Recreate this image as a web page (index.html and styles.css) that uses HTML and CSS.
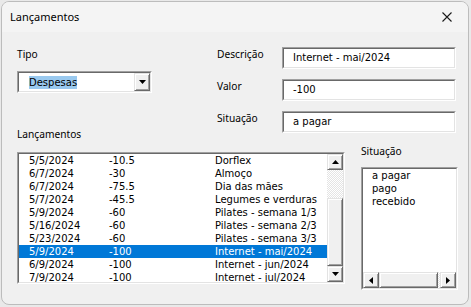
FILE: index.html
```html
<!DOCTYPE html>
<html lang="pt-BR">
<head>
    <meta charset="UTF-8">
    <title>Lançamentos</title>
    <link rel="stylesheet" href="styles.css">
</head>
<body>

    <div class="window">
        <div class="titlebar">
            <span class="title">Lançamentos</span>
            <svg class="close" width="10" height="10" viewBox="0 0 10 10">
                <path d="M0.5 0.5 L9.5 9.5 M9.5 0.5 L0.5 9.5" stroke="#1a1a1a" stroke-width="1.1" fill="none"/>
            </svg>
        </div>

        <div class="form">
            <div class="top">
                <div class="left-col">
                    <div class="label">Tipo</div>
                    <div class="sunken combo">
                        <div class="sunken-in combo-in">
                            <div class="combo-text"><span class="hl">Despesas</span></div>
                            <div class="btn3d combo-btn">
                                <svg width="7" height="4" viewBox="0 0 7 4"><polygon points="0,0 7,0 3.5,4" fill="#000"/></svg>
                            </div>
                        </div>
                    </div>
                    <div class="label list-label">Lançamentos</div>
                </div>

                <div class="fields">
                    <div class="field">
                        <div class="label field-label">Descrição</div>
                        <div class="sunken textbox"><div class="sunken-in textbox-in">Internet - mai/2024</div></div>
                    </div>
                    <div class="field">
                        <div class="label field-label">Valor</div>
                        <div class="sunken textbox"><div class="sunken-in textbox-in">-100</div></div>
                    </div>
                    <div class="field">
                        <div class="label field-label">Situação</div>
                        <div class="sunken textbox"><div class="sunken-in textbox-in">a pagar</div></div>
                    </div>
                </div>
            </div>

            <div class="bottom">
                <div class="sunken main-list">
                    <div class="sunken-in list-in">
                        <div class="rows">
                            <div class="row"><span>5/5/2024</span><span>-10.5</span><span>Dorflex</span></div>
                            <div class="row"><span>6/7/2024</span><span>-30</span><span>Almoço</span></div>
                            <div class="row"><span>6/7/2024</span><span>-75.5</span><span>Dia das mães</span></div>
                            <div class="row"><span>5/7/2024</span><span>-45.5</span><span>Legumes e verduras</span></div>
                            <div class="row"><span>5/9/2024</span><span>-60</span><span>Pilates - semana 1/3</span></div>
                            <div class="row"><span>5/16/2024</span><span>-60</span><span>Pilates - semana 2/3</span></div>
                            <div class="row"><span>5/23/2024</span><span>-60</span><span>Pilates - semana 3/3</span></div>
                            <div class="row selected"><span>5/9/2024</span><span>-100</span><span>Internet - mai/2024</span></div>
                            <div class="row"><span>6/9/2024</span><span>-100</span><span>Internet - jun/2024</span></div>
                            <div class="row"><span>7/9/2024</span><span>-100</span><span>Internet - jul/2024</span></div>
                        </div>
                        <div class="vscroll">
                            <div class="btn3d sb-btn">
                                <svg width="7" height="4" viewBox="0 0 7 4"><polygon points="0,4 7,4 3.5,0" fill="#000"/></svg>
                            </div>
                            <div class="track vtrack"></div>
                            <div class="btn3d vthumb"></div>
                            <div class="btn3d sb-btn">
                                <svg width="7" height="4" viewBox="0 0 7 4"><polygon points="0,0 7,0 3.5,4" fill="#000"/></svg>
                            </div>
                        </div>
                    </div>
                </div>

                <div class="side">
                    <div class="label side-label">Situação</div>
                    <div class="sunken side-list">
                        <div class="sunken-in side-in">
                            <div class="items">
                                <div class="item">a pagar</div>
                                <div class="item">pago</div>
                                <div class="item">recebido</div>
                            </div>
                            <div class="hscroll">
                                <div class="btn3d sb-btn">
                                    <svg width="4" height="7" viewBox="0 0 4 7"><polygon points="4,0 4,7 0,3.5" fill="#000"/></svg>
                                </div>
                                <div class="btn3d hthumb"></div>
                                <div class="track htrack"></div>
                                <div class="btn3d sb-btn">
                                    <svg width="4" height="7" viewBox="0 0 4 7"><polygon points="0,0 0,7 4,3.5" fill="#000"/></svg>
                                </div>
                            </div>
                        </div>
                    </div>
                </div>
            </div>
        </div>
    </div>

</body>
</html>
```

FILE: styles.css
```css
/* fundo atrás da janela */
body {
    margin: 0;
    background-color: #e9e9e9;
    font-family: "Noto Sans", "Open Sans", sans-serif;
    color: #000;
}

.window {
    box-sizing: border-box;
    width: 468px;
    height: 304px;
    margin: 1px 0 0 1px;
    border: 1px solid #bcbcbc;
    border-radius: 8px;
    overflow: hidden;
    background-color: #f0f0f0;
}

.titlebar {
    height: 30px;
    display: flex;
    align-items: center;
    justify-content: space-between;
    padding: 0 16px 0 8px;
    background-color: #f4f4f4;
}

.title {
    font-size: 11px;
    line-height: 14px;
}

.close {
    display: block;
}

.form {
    padding: 15px 0 0 15px;
}

.label {
    font-size: 10.2px;
    line-height: 14px;
    white-space: nowrap;
}

/* bordas 3D estilo Windows clássico */
.sunken {
    box-sizing: border-box;
    border: 1px solid;
    border-color: #a0a0a0 #fff #fff #a0a0a0;
}

.sunken-in {
    box-sizing: border-box;
    height: 100%;
    border: 1px solid;
    border-color: #696969 #e3e3e3 #e3e3e3 #696969;
    background-color: #fff;
}

.btn3d {
    box-sizing: border-box;
    background-color: #f0f0f0;
    border: 1px solid;
    border-color: #e3e3e3 #696969 #696969 #e3e3e3;
    box-shadow: inset 1px 1px #fff, inset -1px -1px #a0a0a0;
}

.track {
    background: repeating-conic-gradient(#fff 0 25%, #e4e4e4 0 50%) 0 0 / 2px 2px;
}

.top {
    display: flex;
}

.left-col {
    width: 135px;
}

.combo {
    width: 135px;
    height: 22px;
    margin-top: 10px;
}

.combo-in {
    display: flex;
}

.combo-text {
    flex: 1;
    padding-left: 10px;
    display: flex;
    align-items: center;
    font-family: "DejaVu Sans", sans-serif;
    font-size: 10px;
}

.hl {
    background-color: #99c9ef;
    line-height: 13px;
}

.combo-btn {
    width: 16px;
    display: flex;
    align-items: center;
    justify-content: center;
}

.list-label {
    margin-top: 34px;
}

.fields {
    margin-left: 65px;
    display: flex;
    flex-direction: column;
    gap: 10px;
}

.field {
    display: flex;
}

.field-label {
    width: 65px;
}

.textbox {
    width: 174px;
    height: 22px;
}

.textbox-in {
    padding-left: 9px;
    font-family: "DejaVu Sans", sans-serif;
    font-size: 10px;
    line-height: 18px;
}

.bottom {
    display: flex;
    gap: 16px;
}

.main-list {
    width: 328px;
    height: 132px;
    margin-top: 11px;
}

.list-in {
    display: flex;
}

.rows {
    flex: 1;
    overflow: hidden;
    font-family: "DejaVu Sans", sans-serif;
    font-size: 10px;
}

.row {
    display: grid;
    grid-template-columns: 80px 106px 1fr;
    padding-left: 10px;
    height: 13px;
    line-height: 13px;
    white-space: nowrap;
}

.row.selected {
    background-color: #0078d7;
    color: #fff;
}

.vscroll {
    width: 16px;
    display: flex;
    flex-direction: column;
}

.sb-btn {
    width: 16px;
    height: 16px;
    display: flex;
    align-items: center;
    justify-content: center;
    flex-shrink: 0;
}

.vtrack {
    height: 28px;
}

.vthumb {
    height: 68px;
}

.side {
    width: 97px;
}

.side-label {
    margin-top: 3px;
}

.side-list {
    height: 123px;
    margin-top: 9px;
}

.side-in {
    display: flex;
    flex-direction: column;
}

.items {
    flex: 1;
    padding-left: 9px;
    font-family: "DejaVu Sans", sans-serif;
    font-size: 10px;
    line-height: 13px;
}

.hscroll {
    height: 16px;
    display: flex;
}

.hthumb {
    width: 59px;
}

.htrack {
    flex: 1;
}
```
